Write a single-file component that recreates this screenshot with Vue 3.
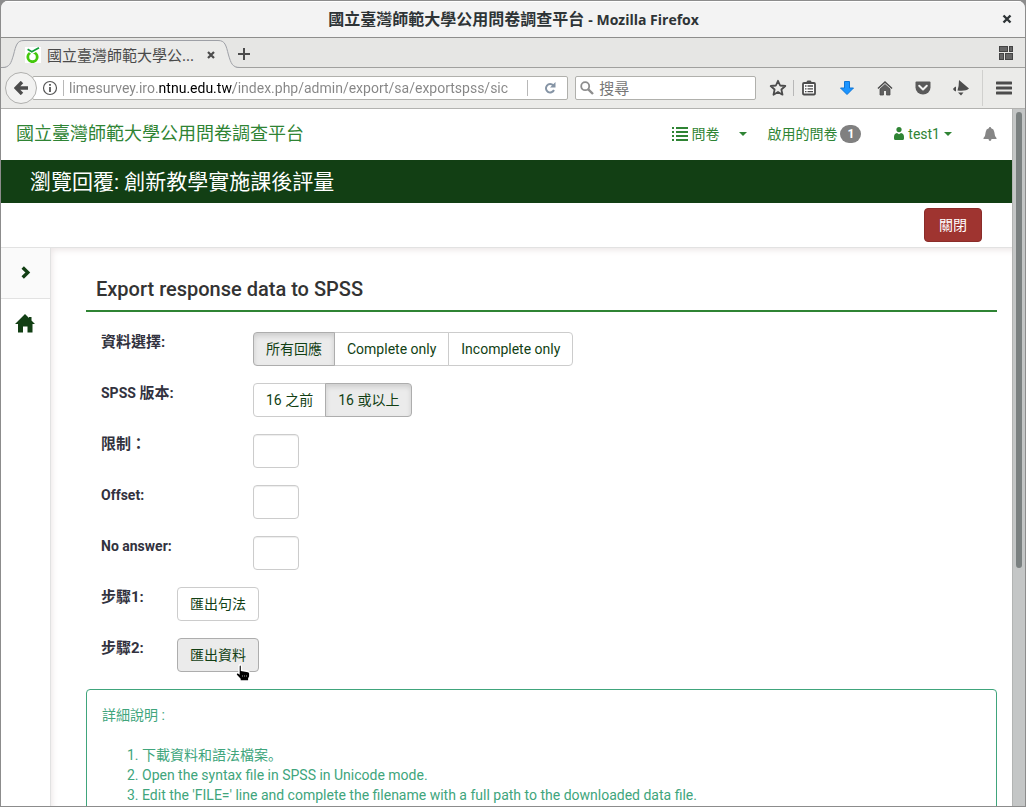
<script setup>
import { ref } from 'vue'

const url = ref('limesurvey.iro.ntnu.edu.tw/index.php/admin/export/sa/exportspss/sic')
const query = ref('')
const completion = ref('all')
const version = ref('16')
const limit = ref('')
const offset = ref('')
const noAnswer = ref('')

const completionOptions = [
  { value: 'all', label: '所有回應' },
  { value: 'complete', label: 'Complete only' },
  { value: 'incomplete', label: 'Incomplete only' },
]
const versionOptions = [
  { value: '15', label: '16 之前' },
  { value: '16', label: '16 或以上' },
]
const steps = [
  '下載資料和語法檔案。',
  'Open the syntax file in SPSS in Unicode mode.',
  "Edit the 'FILE=' line and complete the filename with a full path to the downloaded data file.",
]
</script>

<template>
  <div class="desktop">
    <div class="window">
      <header class="titlebar">
        <span class="window-title">國立臺灣師範大學公用問卷調查平台 <span class="app-name">- Mozilla Firefox</span></span>
        <button class="window-close" aria-label="Close window">
          <svg width="10" height="10" viewBox="0 0 10 10"><path d="M1.5 1.5 8.5 8.5M8.5 1.5 1.5 8.5" stroke="#2e3436" stroke-width="2.4" /></svg>
        </button>
      </header>

      <div class="tabbar">
        <div class="tab">
          <svg class="tab-edge" width="22" height="28" viewBox="0 0 22 28">
            <path d="M0 28C8 28 9 23 11.500 15C14 5 15 .5 22 .5V28Z" fill="#ebebe9" />
            <path d="M0 27.5C8 27.5 9 23 11.500 15C14 5 15 .5 22 .5" fill="none" stroke="#9ea0a6" />
          </svg>
          <div class="tab-body">
            <svg width="16" height="16" viewBox="0 0 16 16">
              <rect width="16" height="16" fill="#fff" />
              <circle cx="7.5" cy="10" r="4.7" fill="none" stroke="#44c80c" stroke-width="2.8" />
              <path d="M2.5 1.5 7 5 14 .5" fill="none" stroke="#fff" stroke-width="4" />
              <path d="M2.6 2.2 6.8 4.8 14 .8" fill="none" stroke="#13a038" stroke-width="1.8" />
            </svg>
            <span class="tab-title">國立臺灣師範大學公...</span>
            <button class="tab-close" aria-label="Close tab">
              <svg width="8" height="8" viewBox="0 0 8 8"><path d="M1 1 7 7M7 1 1 7" stroke="#4c4c4c" stroke-width="2.2" /></svg>
            </button>
          </div>
          <svg class="tab-edge" width="22" height="28" viewBox="0 0 22 28">
            <path d="M22 28C14 28 13 23 10.500 15C8 5 7 .5 0 .5V28Z" fill="#ebebe9" />
            <path d="M22 27.5C14 27.5 13 23 10.500 15C8 5 7 .5 0 .5" fill="none" stroke="#9ea0a6" />
          </svg>
        </div>
        <button class="new-tab" aria-label="New tab">
          <svg width="12" height="12" viewBox="0 0 12 12"><path d="M6 0V12M0 6H12" stroke="#4c4c4c" stroke-width="2" /></svg>
        </button>
        <button class="tab-groups" aria-label="Tab groups">
          <svg width="14" height="14" viewBox="0 0 14 14" fill="#666" stroke="#444">
            <rect x=".5" y=".5" width="8" height="5" /><rect x="10.500" y=".5" width="3" height="5" />
            <rect x=".5" y="7.500" width="4" height="6" /><rect x="6.500" y="7.500" width="7" height="6" />
          </svg>
        </button>
      </div>

      <nav class="toolbar">
        <button class="back" aria-label="Back">
          <svg width="14" height="14" viewBox="0 0 14 14"><path d="M8 1 2.200 7 8 13M2.500 7H14" fill="none" stroke="#4c4c4c" stroke-width="3.400" /></svg>
        </button>
        <div class="urlbar">
          <svg width="16" height="16" viewBox="0 0 16 16">
            <circle cx="8" cy="8" r="6.500" fill="none" stroke="#555" stroke-width="1.200" />
            <path d="M8 4V5.800M8 7V12" stroke="#555" stroke-width="1.800" />
          </svg>
          <span class="bar"></span>
          <input v-model="url" class="url" type="text" aria-label="Address" />
          <span class="bar"></span>
          <button class="reload" aria-label="Reload">
            <svg width="12" height="12" viewBox="0 0 12 12">
              <path d="M9.300 3.500A4.200 4.200 0 1 0 10 8" fill="none" stroke="#8594a5" stroke-width="2" />
              <path d="M11.500 0V5.500H6Z" fill="#8594a5" />
            </svg>
          </button>
        </div>
        <div class="searchbar">
          <svg width="14" height="14" viewBox="0 0 14 14" fill="none" stroke="#8d8d8d"><circle cx="5.200" cy="5.200" r="4" stroke-width="1.800" /><path d="M8.300 8.300 13 13" stroke-width="2.400" /></svg>
          <input v-model="query" class="search" type="text" placeholder="搜尋" aria-label="搜尋" />
        </div>
        <div class="tools">
          <button aria-label="Bookmark">
            <svg width="18" height="18" viewBox="0 0 18 18"><path d="M9 1.800 11.100 6.500 16.300 7 12.400 10.500 13.500 15.700 9 13 4.500 15.700 5.600 10.500 1.700 7 6.900 6.500Z" fill="none" stroke="#4c4c4c" stroke-width="1.800" stroke-linejoin="round" /></svg>
          </button>
          <span class="bar"></span>
          <div class="tool-group">
            <button aria-label="Bookmarks list">
              <svg width="16" height="16" viewBox="0 0 16 16"><rect x="2" y="3" width="12" height="11.500" rx="1" fill="#fff" stroke="#4c4c4c" stroke-width="1.800" /><path d="M4.500 3 6.500 .5H9.500L11.500 3Z" fill="#4c4c4c" /><path d="M4 6H5.500M6.500 6H12M4 8.800H5.500M6.500 8.800H12M4 11.600H5.500M6.500 11.600H12" stroke="#4c4c4c" stroke-width="1.300" /></svg>
            </button>
            <button aria-label="Downloads">
              <svg width="16" height="16" viewBox="0 0 16 16"><path d="M5.500 1.500H10.500V8H14.500L8 14.500 1.500 8H5.500Z" fill="#1a94ff" stroke="#0c74d6" /></svg>
            </button>
            <button aria-label="Home">
              <svg width="16" height="16" viewBox="0 0 16 16"><path d="M1 8.500 8 2 15 8.500" fill="none" stroke="#4c4c4c" stroke-width="1.600" /><path d="M3 9 8 4.500 13 9V15H9.500V10.500H6.500V15H3Z" fill="#5f5f5f" stroke="#4c4c4c" stroke-width=".8" /></svg>
            </button>
            <button aria-label="Pocket">
              <svg width="16" height="16" viewBox="0 0 16 16"><path d="M1.500 1.500H14.500Q15.500 1.500 15.500 2.500V7.500A7.500 7 0 0 1 .5 7.500V2.500Q.5 1.500 1.500 1.500Z" fill="#5a5a5a" /><path d="M4.200 5.800 8 9.400 11.800 5.800" fill="none" stroke="#f3f3f2" stroke-width="2" stroke-linecap="round" stroke-linejoin="round" /></svg>
            </button>
            <button aria-label="Announcements">
              <svg width="16" height="16" viewBox="0 0 16 16" fill="#4c4c4c"><path d="M6 0 16 8.500Q13 11.500 4.500 10.500Q6 6 6 0Z" /><path d="M3 6.500V11.500Q.5 10.500 0 9Q1 7 3 6.500Z" /><path d="M5 12.500H10.500L8 15.500Z" /></svg>
            </button>
          </div>
        </div>
        <button class="menu" aria-label="Menu">
          <svg width="16" height="14" viewBox="0 0 16 14"><path d="M1 2H15M1 7H15M1 12H15" stroke="#4c4c4c" stroke-width="3" stroke-linecap="round" /></svg>
        </button>
      </nav>

      <div class="viewport">
        <div class="page">
          <header class="site-header">
            <a class="brand" href="#">國立臺灣師範大學公用問卷調查平台</a>
            <div class="site-nav">
              <a class="surveys" href="#">
                <svg width="16" height="14" viewBox="0 0 16 14"><path d="M0 1H2M0 5H2M0 9H2M0 13H2M4 1H16M4 5H16M4 9H16M4 13H16" stroke="#2f8434" stroke-width="2" /></svg>
                問卷
              </a>
              <a class="survey-caret" href="#" aria-label="問卷選單"><span class="caret"></span></a>
              <a class="active-surveys" href="#">啟用的問卷 <span class="badge">1</span></a>
              <a class="user" href="#">
                <svg width="10" height="13" viewBox="0 0 10 13" fill="#2f8434"><circle cx="5" cy="2.600" r="2.600" /><path d="M3 6 5 7.200 7 6Q10 6.500 10 10V11.500Q10 13 8.500 13H1.500Q0 13 0 11.500V10Q0 6.500 3 6Z" /></svg>
                test1
                <span class="caret"></span>
              </a>
              <a class="bell" href="#" aria-label="Notifications">
                <svg width="14" height="14" viewBox="0 0 14 14" fill="#868686"><path d="M7 0Q8.200 0 8.200 1.200Q11 2 11.300 5Q11.500 9 13.500 11V12H.5V11Q2.500 9 2.700 5Q3 2 5.800 1.200Q5.800 0 7 0Z" /><path d="M5.500 12H8.500Q8.300 14 7 14Q5.700 14 5.500 12Z" /></svg>
              </a>
            </div>
          </header>
          <h1 class="survey-title">瀏覽回覆: 創新教學實施課後評量</h1>
          <div class="actions"><button class="close">關閉</button></div>
          <div class="body">
            <aside class="sidebar">
              <button class="expand" aria-label="Expand sidebar">
                <svg width="10" height="13" viewBox="0 0 10 13"><path d="M1.700 1.500 6.800 6.500 1.700 11.500" fill="none" stroke="#123f14" stroke-width="3.400" /></svg>
              </button>
              <a class="home" href="#" aria-label="Home">
                <svg width="20" height="19" viewBox="0 0 20 19"><path d="M10 0 14 4V3H16.500V6.500L20 10H17.500V18.500H12.500V12.500H8V18.500H3V10H0Z" fill="#123f14" /></svg>
              </a>
            </aside>
            <main class="content">
              <h2>Export response data to SPSS</h2>
              <form class="form" @submit.prevent>
                <div class="row">
                  <span id="completion-label" class="label cjk">資料選擇:</span>
                  <div class="group" role="radiogroup" aria-labelledby="completion-label">
                    <label v-for="o in completionOptions" :key="o.value" class="btn" :class="{ active: completion === o.value }">
                      <input v-model="completion" type="radio" name="completion" :value="o.value" />{{ o.label }}
                    </label>
                  </div>
                </div>
                <div class="row">
                  <span id="version-label" class="label">SPSS <span class="cjk">版本:</span></span>
                  <div class="group" role="radiogroup" aria-labelledby="version-label">
                    <label v-for="o in versionOptions" :key="o.value" class="btn" :class="{ active: version === o.value }">
                      <input v-model="version" type="radio" name="version" :value="o.value" />{{ o.label }}
                    </label>
                  </div>
                </div>
                <div class="row">
                  <label class="label cjk" for="limit">限制：</label>
                  <input id="limit" v-model="limit" class="field" type="text" />
                </div>
                <div class="row">
                  <label class="label" for="offset">Offset:</label>
                  <input id="offset" v-model="offset" class="field" type="text" />
                </div>
                <div class="row">
                  <label class="label" for="no-answer">No answer:</label>
                  <input id="no-answer" v-model="noAnswer" class="field" type="text" />
                </div>
                <div class="row step">
                  <label class="label cjk" for="syntax">步驟1:</label>
                  <button id="syntax" class="btn" type="button">匯出句法</button>
                </div>
                <div class="row step">
                  <label class="label cjk" for="data">步驟2:</label>
                  <div class="pointed">
                    <button id="data" class="btn hovered" type="button">匯出資料</button>
                    <svg class="cursor" width="16" height="18" viewBox="0 0 16 18">
                      <path d="M4 2.500Q4 .8 5.200 .8T6.500 2.500V6.500L13 7.500Q14.800 8 14.800 9.500V12.500L13.800 14.500V17H5V15L1.200 11Q.8 8.500 3 8.800L4 9.500Z" fill="#000" stroke="#fff" stroke-width="1.400" />
                      <path d="M7.500 11V13M9.500 11V13M11.500 11V13" stroke="#666" stroke-width=".8" />
                    </svg>
                  </div>
                </div>
              </form>
              <section class="notes">
                <p>詳細說明 :</p>
                <ol>
                  <li v-for="s in steps" :key="s">{{ s }}</li>
                </ol>
              </section>
            </main>
          </div>
        </div>
        <div class="scrollbar"><div class="thumb"></div></div>
      </div>
    </div>
  </div>
</template>

<style>
body {
  background: #8f8f8f;
}
</style>

<style scoped>
* {
  box-sizing: border-box;
}
svg {
  display: block;
  flex: none;
}
button {
  border: 0;
  background: none;
  padding: 0;
  font: inherit;
  color: inherit;
}
input {
  font: inherit;
  min-width: 0;
}
a {
  color: inherit;
  text-decoration: none;
}
.desktop {
  height: 100vh;
  padding: 1px;
  background: #8c8c8c;
  font-family: "Open Sans", "Noto Sans CJK SC", sans-serif;
}
.window {
  height: 100%;
  display: flex;
  flex-direction: column;
  overflow: hidden;
  border-radius: 7px 7px 0 0;
  background: #ebebe9;
}
.titlebar {
  flex: none;
  height: 37px;
  display: flex;
  align-items: center;
  padding: 0 13px 0 24px;
  background: #f3f3f3;
  border-bottom: 1px solid #8e8e8c;
  box-shadow: inset 0 1px #fff;
  color: #2e3436;
}
.window-title {
  flex: 1;
  text-align: center;
  font-size: 16px;
  line-height: 20px;
  font-weight: 700;
}
.app-name {
  font-size: 14px;
}
.tabbar {
  flex: none;
  height: 30px;
  display: flex;
  align-items: flex-end;
  background: #e6e6e4;
  box-shadow: inset 0 -1px #a0a09e;
}
.tab {
  display: flex;
  align-items: flex-end;
  padding-left: 1px;
}
.tab-body {
  width: 194px;
  height: 28px;
  padding-left: 1px;
  display: flex;
  align-items: center;
  border-top: 1px solid #9ea0a6;
  background: #ebebe9;
}
.tab-title {
  width: 153px;
  margin-left: 6px;
  font-size: 15px;
  line-height: 20px;
  color: #4a4a4a;
  white-space: nowrap;
}
.tab-close {
  margin-left: 7px;
}
.new-tab {
  padding: 8px 0;
  margin-left: -2px;
}
.tab-groups {
  margin-left: auto;
  padding: 8px 12px;
}
.toolbar {
  flex: none;
  height: 41px;
  display: flex;
  align-items: center;
  padding-left: 4px;
  background: #ebebe9;
  border-bottom: 1px solid #b2b2b0;
}
.back {
  position: relative;
  z-index: 1;
  flex: none;
  width: 32px;
  height: 32px;
  display: grid;
  place-items: center;
  border: 1px solid #b0b0ae;
  border-radius: 50%;
  background: #f2f2f1;
}
.urlbar,
.searchbar {
  height: 24px;
  display: flex;
  align-items: center;
  border: 1px solid #b0b0ac;
  border-radius: 2px;
  background: #fff;
}
.urlbar {
  flex: 538 1 0;
  min-width: 0;
  margin-left: -5px;
  padding-left: 9px;
}
.bar {
  width: 1px;
  height: 16px;
  margin: 0 5px;
  background: #b8b8b8;
}
.url {
  flex: 1;
  border: 0;
  outline: 0;
  padding: 0;
  height: 22px;
  font-family: Roboto, sans-serif;
  font-size: 14px;
  color: transparent;
  background: linear-gradient(to right, #858585 0 90px, #000 90px 164px, #858585 164px);
  -webkit-background-clip: text;
  background-clip: text;
}
.reload {
  padding: 5px 11px;
}
.searchbar {
  flex: 179 1 0;
  min-width: 0;
  margin-left: 7px;
  padding-left: 4px;
}
.search {
  flex: 1;
  margin-left: 5px;
  padding: 0;
  border: 0;
  outline: 0;
  background: none;
  font-size: 15px;
  height: 22px;
}
.search::placeholder {
  color: #777;
}
.tools {
  flex: none;
  display: flex;
  align-items: center;
  margin-left: 7px;
}
.tools .bar {
  margin: 0;
}
.tool-group {
  display: flex;
  gap: 8px;
}
.tools button {
  width: 30px;
  height: 30px;
  display: grid;
  place-items: center;
}
.menu {
  flex: none;
  width: 43px;
  height: 36px;
  margin-left: 6px;
  display: grid;
  place-items: center;
  border-left: 1px solid #d0d0ce;
}
.viewport {
  flex: 1;
  min-height: 0;
  display: flex;
  background: #fff;
  font-family: Roboto, "Noto Sans CJK SC", sans-serif;
  font-size: 14px;
  line-height: 20px;
}
.page {
  flex: 1;
  min-width: 0;
  display: flex;
  flex-direction: column;
  overflow: hidden;
}
.scrollbar {
  flex: none;
  width: 13px;
  padding: 3px;
  background: #c4c6c6;
  border-left: 1px solid #b2b4b3;
}
.thumb {
  width: 6px;
  height: 66%;
  border-radius: 3px;
  background: #7a8080;
}
.site-header {
  flex: none;
  height: 51px;
  display: flex;
  align-items: center;
  justify-content: space-between;
  padding: 0 15px 2px;
  color: #2f8434;
}
.brand {
  font-size: 18px;
}
.site-nav,
.site-nav a {
  display: flex;
  align-items: center;
}
.surveys {
  gap: 3px;
}
.caret {
  border: 4px solid transparent;
  border-top-color: #2f8434;
  border-bottom: 0;
}
.survey-caret {
  padding: 0 20px;
}
.badge {
  margin-left: 3px;
  padding: 0 7px;
  border-radius: 10px;
  background: #808080;
  color: #fff;
  font-size: 12px;
  font-weight: 700;
  line-height: 18px;
}
.user {
  margin-left: 33px;
  gap: 4px;
}
.bell {
  margin-left: 31px;
}
.survey-title {
  flex: none;
  margin: 0;
  padding: 1px 29px 0;
  background: #123f14;
  color: #fff;
  font-size: 21px;
  font-weight: 400;
  line-height: 42px;
}
.actions {
  flex: none;
  height: 45px;
  display: flex;
  align-items: center;
  justify-content: flex-end;
  padding-right: 30px;
  border-bottom: 1px solid #e2e2e2;
}
.close {
  height: 34px;
  padding: 0 14px;
  border: 1px solid #8a2c29;
  border-radius: 4px;
  background: #9f3430;
  color: #fff;
}
.body {
  flex: 1;
  min-height: 0;
  display: flex;
}
.sidebar {
  flex: none;
  width: 50px;
  border-right: 1px solid #e2e2e2;
}
.expand {
  width: 100%;
  height: 51px;
  display: grid;
  place-items: center;
  padding-bottom: 2px;
  border-bottom: 1px solid #e2e2e2;
  background: #fafafa;
}
.home {
  height: 49px;
  display: grid;
  place-items: center;
  padding: 0 2px 1px 0;
}
.content {
  flex: 1;
  min-width: 0;
  padding: 26px 15px 0 35px;
  box-shadow: inset 3px 4px 6px -2px #ece6e6;
}
h2 {
  margin: 0 0 20px;
  padding: 0 10px 6px;
  border-bottom: 2px solid #2f8434;
  color: #333;
  font-size: 20px;
  font-weight: 500;
  line-height: 30px;
}
.form {
  padding-left: 15px;
}
.row {
  display: flex;
  height: 34px;
  margin-bottom: 17px;
}
.label {
  width: 152px;
  color: #32323e;
  font-weight: 700;
}
.cjk {
  font-family: Roboto, "Noto Sans CJK TC", sans-serif;
  font-size: 15px;
}
.step .label {
  width: 76px;
}
.group {
  display: flex;
}
.btn {
  position: relative;
  height: 34px;
  padding: 6px 12px;
  border: 1px solid #ccc;
  border-radius: 4px;
  background: #fff;
  color: #123f14;
  white-space: nowrap;
}
.btn input {
  position: absolute;
  inset: 0;
  margin: 0;
  opacity: 0;
}
.group .btn:not(:first-child) {
  margin-left: -1px;
  border-top-left-radius: 0;
  border-bottom-left-radius: 0;
}
.group .btn:not(:last-child) {
  border-top-right-radius: 0;
  border-bottom-right-radius: 0;
}
.btn.active {
  z-index: 1;
  border-color: #adadad;
  background: #ebebeb;
  box-shadow: inset 0 3px 5px rgba(0, 0, 0, 0.125);
}
.btn.hovered {
  border-color: #adadad;
  background: #ebebeb;
}
.field {
  width: 46px;
  height: 34px;
  padding: 6px 12px;
  border: 1px solid #ccc;
  border-radius: 4px;
  background: #fff;
  box-shadow: inset 0 1px 1px rgba(0, 0, 0, 0.075);
}
.pointed {
  position: relative;
}
.cursor {
  position: absolute;
  left: 58px;
  top: 26px;
}
.notes {
  padding: 15px;
  min-height: 200px;
  border: 1px solid #40a57c;
  border-radius: 4px;
  color: #40a57c;
}
.notes p {
  margin: 0 0 20px;
}
.notes ol {
  margin: 0;
  padding-left: 40px;
}
</style>
